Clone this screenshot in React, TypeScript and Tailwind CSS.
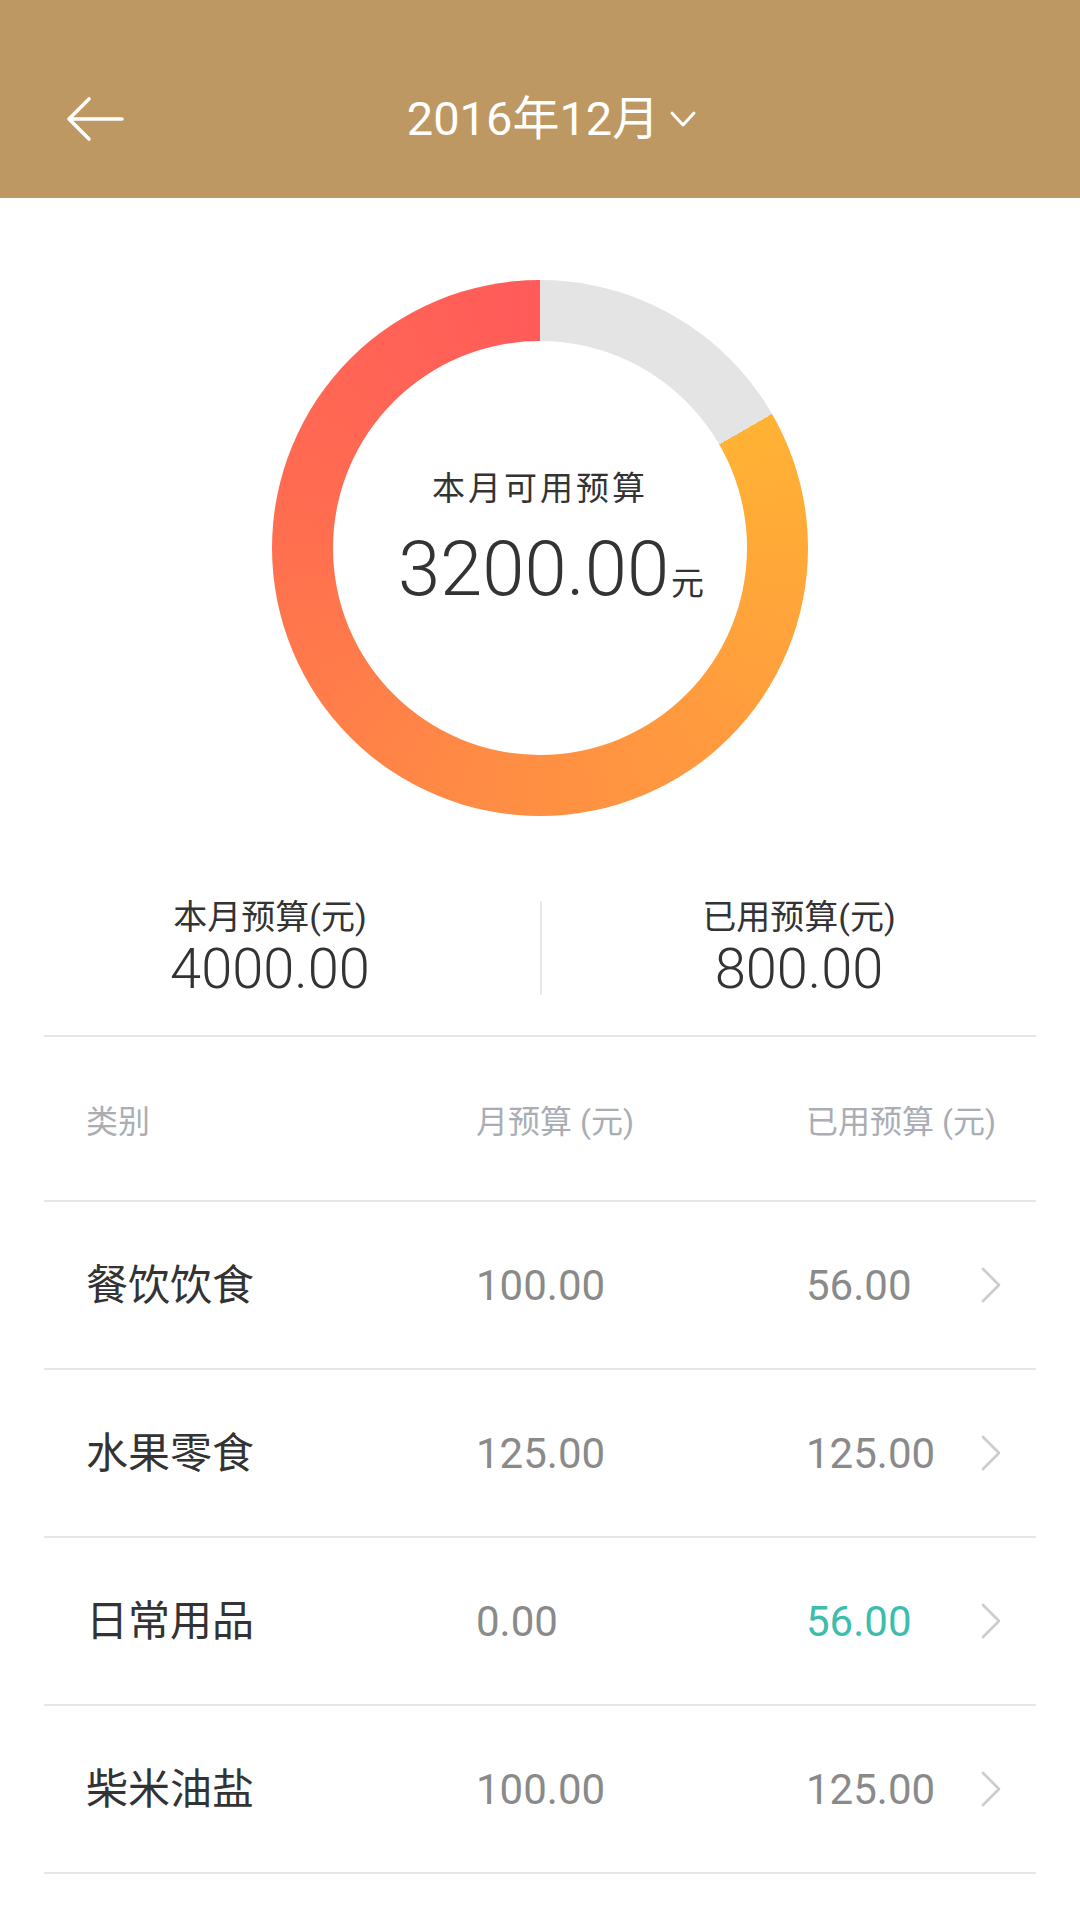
import React from 'react';

type Row = {
  name: string;
  budget: string;
  used: string;
  highlight?: boolean;
};

const rows: Row[] = [
  { name: '餐饮饮食', budget: '100.00', used: '56.00' },
  { name: '水果零食', budget: '125.00', used: '125.00' },
  { name: '日常用品', budget: '0.00', used: '56.00', highlight: true },
  { name: '柴米油盐', budget: '100.00', used: '125.00' },
];

const BackArrow = () => (
  <svg width="58" height="46" viewBox="0 0 58 46" fill="none">
    <path
      d="M23 3 L3 23 L23 43 M3 23 H56"
      stroke="white"
      strokeWidth="3.6"
      strokeLinecap="round"
      strokeLinejoin="round"
    />
  </svg>
);

const ChevronDown = () => (
  <svg width="28" height="18" viewBox="0 0 28 18" fill="none">
    <path d="M3 3 L14 15 L25 3" stroke="white" strokeWidth="3" strokeLinecap="round" strokeLinejoin="round" />
  </svg>
);

const ChevronRight = () => (
  <svg width="22" height="38" viewBox="0 0 22 38" fill="none">
    <path d="M3 3 L19 19 L3 35" stroke="#cccccc" strokeWidth="2.6" strokeLinecap="round" strokeLinejoin="round" />
  </svg>
);

export default function App() {
  return (
    <div className="w-[1080px] min-h-[1920px] bg-white font-[family-name:Roboto,'Noto_Sans_CJK_SC',sans-serif]">
      {/* Header */}
      <div className="h-[198px] bg-[#be9862] pt-[40px] grid grid-cols-[180px_1fr_180px] items-center">
        <div className="pl-[66px] flex items-center">
          <BackArrow />
        </div>
        <div className="flex items-center justify-center pl-[24px] gap-[10px] text-white">
          <span className="text-[47px] leading-[60px]">2016年12月</span>
          <ChevronDown />
        </div>
        <div />
      </div>

      {/* Donut */}
      <div className="pt-[82px] flex justify-center">
        <div className="w-[536px] h-[536px] rounded-full bg-[image:conic-gradient(#e4e4e4_0deg_60deg,#ffb234_60deg,#ff9a3f_140deg,#ff8a45_200deg,#ff6c50_280deg,#ff5b5a_360deg)] flex items-center justify-center">
          <div className="w-[414px] h-[414px] rounded-full bg-white flex flex-col items-center justify-center pb-[20px]">
            <div className="text-[33px] leading-[40px] tracking-[3px] text-[#333333]">本月可用预算</div>
            <div className="mt-[22px] pl-[22px] flex items-baseline text-[#333333]">
              <span className="text-[76px] leading-[76px] font-light">3200.00</span>
              <span className="text-[33px] leading-[30px] ml-[2px]">元</span>
            </div>
          </div>
        </div>
      </div>

      {/* Summary */}
      <div className="mx-[44px] border-b-2 border-[#e6e6e6]">
        <div className="flex items-center pt-[80px] pb-[35px] -mx-[44px]">
          <div className="w-[540px] flex flex-col items-center text-[#333333]">
            <div className="text-[34px] leading-[42px]">本月预算(元)</div>
            <div className="text-[56px] leading-[62px] font-light">4000.00</div>
          </div>
          <div className="w-[2px] h-[94px] bg-[#e8e8e8]" />
          <div className="flex-1 pr-[24px] flex flex-col items-center text-[#333333]">
            <div className="text-[34px] leading-[42px]">已用预算(元)</div>
            <div className="text-[56px] leading-[62px] font-light">800.00</div>
          </div>
        </div>
      </div>

      {/* Table */}
      <div className="mx-[44px]">
        <div className="h-[165px] pt-[6px] grid grid-cols-[390px_330px_1fr_22px] items-center pl-[42px] pr-[34px] border-b-2 border-[#e6e6e6] text-[32px] text-[#aaadb3]">
          <span>类别</span>
          <span>月预算 (元)</span>
          <span className="col-span-2">已用预算 (元)</span>
        </div>
        {rows.map((r) => (
          <div
            key={r.name}
            className="h-[168px] grid grid-cols-[390px_330px_1fr_22px] items-center pl-[42px] pr-[34px] border-b-2 border-[#e6e6e6]"
          >
            <span className="text-[42px] text-[#333333]">{r.name}</span>
            <span className="text-[42px] text-[#8a8a8a]">{r.budget}</span>
            <span className={`text-[42px] ${r.highlight ? 'text-[#3dbdad]' : 'text-[#8a8a8a]'}`}>{r.used}</span>
            <ChevronRight />
          </div>
        ))}
      </div>
    </div>
  );
}
